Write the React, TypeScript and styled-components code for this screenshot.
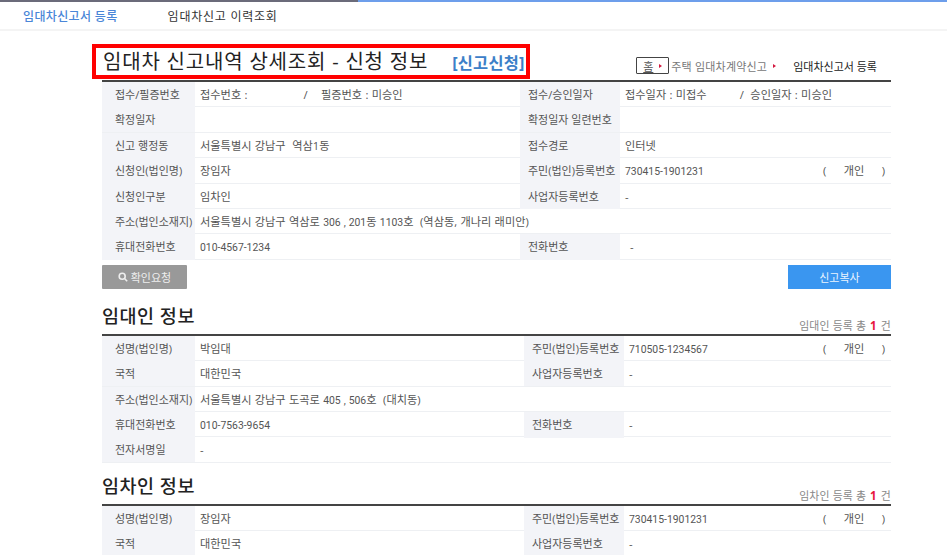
import React from "react";
import styled, { createGlobalStyle } from "styled-components";

const Global = createGlobalStyle`
  html, body { margin: 0; padding: 0; background: #fff; overflow: hidden; }
  body { font-family: "Open Sans", "Noto Sans CJK KR", sans-serif; color: #444; }
`;
const Page = styled.div`width: 947px; height: 555px; overflow: hidden; background: #fff;`;
const TopBar = styled.nav`
  height: 27px; border-top: 2px solid #6b6b7a; border-bottom: 2px solid #f4f4f4;
  display: flex; align-items: center; padding-left: 23px; gap: 50px; font-size: 12px; position: relative;
  &::before { content: ""; position: absolute; left: 358px; right: 0; top: -2px; height: 2px; background: #6d9eeb; }
`;
const NavItem = styled.span<{ $active?: boolean }>`
  color: ${p => (p.$active ? "#4a86d8" : "#333")};
  font-weight: ${p => (p.$active ? 500 : 400)};
  letter-spacing: ${p => (p.$active ? "0.35px" : "0.75px")};
`;
const Content = styled.main`margin-left: 102px; width: 789px;`;
const Head = styled.header`
  height: 49px; display: flex; justify-content: space-between; align-items: flex-end; position: relative;
`;
const TitleBox = styled.div`
  position: absolute; left: -10px; top: 13px; width: 438px; height: 35px; box-sizing: border-box;
  border: 4px solid #f00; display: flex; align-items: center; padding-left: 7px;
`;
const Title = styled.h1`margin: 0; font-size: 20px; font-weight: 400; color: #222; letter-spacing: 0.8px; white-space: nowrap; line-height: 27px;`;
const Apply = styled.span`margin-left: 24px; font-size: 16.4px; font-weight: 700; color: #3c80c8; letter-spacing: 0.2px; white-space: nowrap;`;
const Crumbs = styled.div`
  margin-left: auto; display: flex; align-items: center; height: 17px; margin-bottom: 6px; font-size: 11px; color: #777; white-space: nowrap; padding-right: 14px;
`;
const Home = styled.span`
  width: 33px; height: 17px; box-sizing: border-box; border: 1px solid #444; border-radius: 1px; display: flex; align-items: center;
  justify-content: flex-start; padding-left: 6px; gap: 6px; color: #555; text-decoration: underline; margin-right: 2px;
`;
const Arrow = styled.i<{ $gap?: number }>`
  display: inline-block; width: 0; height: 0; margin-left: ${p => p.$gap ?? 0}px;
  border-left: 3px solid #d3173f; border-top: 2.5px solid transparent; border-bottom: 2.5px solid transparent;
`;
const CrumbText = styled.span`letter-spacing: 0.2px;`;
const CrumbNow = styled.span`color: #222; margin-left: 17px;`;
const Table = styled.section`border-top: 2px solid #444; `;
const Row = styled.div<{ $left: number; $solo?: boolean }>`
  display: grid; box-sizing: border-box; height: 25.4px;
  grid-template-columns: ${p => (p.$solo ? "93px 1fr" : `93px ${p.$left}px 100px 1fr`)};
  border-bottom: 1px solid #eef0f3; font-size: 11.2px; line-height: 25px;
`;
const Label = styled.div<{ $inset?: number }>`
  background: #f3f4f8; color: #555; font-size: 11px; padding-left: ${p => p.$inset ?? 13}px; white-space: nowrap;
`;
const Cell = styled.div<{ $inset?: number }>`
  color: #555; padding-left: ${p => p.$inset ?? 5}px; white-space: pre; position: relative; word-spacing: 0.4px;
`;
const Digits = styled.span`font-family: Roboto, "Noto Sans CJK KR", sans-serif; font-size: 10.4px;`;
const Personal = styled.span<{ $at: number }>`
  position: absolute; left: ${p => p.$at}px; top: 0; width: 62px; display: flex; justify-content: space-between; color: #555;
`;
const Buttons = styled.div`display: flex; justify-content: space-between; margin-top: 5px; height: 24px;`;
const GreyBtn = styled.button`
  width: 85px; border: 0; border-radius: 1px; background: #999; color: #eee; font: inherit; font-size: 11px; display: flex; align-items: center; justify-content: center; gap: 3px; padding: 0;
`;
const BlueBtn = styled.button`
  width: 103px; border: 0; background: #3a96f0; color: #eaf4ff; font: inherit; font-size: 11px; padding: 0;
`;
const SectionHead = styled.div<{ $top: number }>`
  display: flex; justify-content: space-between; align-items: flex-end; margin-top: ${p => p.$top}px; height: 28px; padding-bottom: 6px;
`;
const SectionTitle = styled.h2`margin: 0; font-size: 18.5px; font-weight: 500; color: #222; letter-spacing: 0.5px; line-height: 24px;`;
const Count = styled.span`font-size: 10.9px; color: #888; letter-spacing: 0.15px; margin-bottom: -5px;`;
const Num = styled.b`color: #e8143c; font-size: 11.5px; margin: 0 1px;`;

const Search = () => (
  <svg width="10" height="10" viewBox="0 0 10 10" fill="none" stroke="#eee" strokeWidth="1.6">
    <circle cx="4.2" cy="4.2" r="3" />
    <path d="M6.5 6.5 9.2 9.2" />
  </svg>
);

const PersonMark = ({ at }: { at: number }) => (
  <Personal $at={at}><span>(</span><span>개인</span><span>)</span></Personal>
);

export default function App() {
  return (
    <Page>
      <Global />
      <TopBar>
        <NavItem $active>임대차신고서 등록</NavItem>
        <NavItem>임대차신고 이력조회</NavItem>
      </TopBar>
      <Content>
        <Head>
          <TitleBox>
            <Title>임대차 신고내역 상세조회 - 신청 정보</Title>
            <Apply>[신고신청]</Apply>
          </TitleBox>
          <Crumbs>
            <Home>홈<Arrow /></Home>
            <CrumbText>주택 임대차계약신고</CrumbText>
            <Arrow $gap={6} />
            <CrumbNow>임대차신고서 등록</CrumbNow>
          </Crumbs>
        </Head>
        <Table>
          <Row $left={325}><Label>접수/필증번호</Label><Cell>{"접수번호 :                 /    필증번호 : 미승인"}</Cell><Label $inset={8}>접수/승인일자</Label><Cell>{"접수일자 : 미접수          /  승인일자 : 미승인"}</Cell></Row>
          <Row $left={325}><Label>확정일자</Label><Cell /><Label $inset={8}>확정일자 일련번호</Label><Cell /></Row>
          <Row $left={325}><Label>신고 행정동</Label><Cell>서울특별시 강남구  역삼1동</Cell><Label $inset={8}>접수경로</Label><Cell>인터넷</Cell></Row>
          <Row $left={325}><Label>신청인(법인명)</Label><Cell>장임자</Cell><Label $inset={8}>주민(법인)등록번호</Label><Cell><Digits>730415-1901231</Digits><PersonMark at={203} /></Cell></Row>
          <Row $left={325}><Label>신청인구분</Label><Cell>임차인</Cell><Label $inset={8}>사업자등록번호</Label><Cell>-</Cell></Row>
          <Row $solo $left={325}><Label>주소(법인소재지)</Label><Cell>서울특별시 강남구 역삼로 <Digits>306 , 201</Digits>동 <Digits>1103</Digits>호  (역삼동, 개나리 래미안)</Cell></Row>
          <Row $left={325}><Label>휴대전화번호</Label><Cell><Digits>010-4567-1234</Digits></Cell><Label $inset={8}>전화번호</Label><Cell $inset={10}>-</Cell></Row>
        </Table>
        <Buttons>
          <GreyBtn><Search />확인요청</GreyBtn>
          <BlueBtn>신고복사</BlueBtn>
        </Buttons>
        <SectionHead $top={11}>
          <SectionTitle>임대인 정보</SectionTitle>
          <Count>임대인 등록 총 <Num>1</Num> 건</Count>
        </SectionHead>
        <Table>
          <Row $left={329}><Label>성명(법인명)</Label><Cell>박임대</Cell><Label $inset={8}>주민(법인)등록번호</Label><Cell><Digits>710505-1234567</Digits><PersonMark at={199} /></Cell></Row>
          <Row $left={329}><Label>국적</Label><Cell>대한민국</Cell><Label $inset={8}>사업자등록번호</Label><Cell>-</Cell></Row>
          <Row $solo $left={329}><Label>주소(법인소재지)</Label><Cell>서울특별시 강남구 도곡로 <Digits>405 , 506</Digits>호  (대치동)</Cell></Row>
          <Row $left={329}><Label>휴대전화번호</Label><Cell><Digits>010-7563-9654</Digits></Cell><Label $inset={8}>전화번호</Label><Cell>-</Cell></Row>
          <Row $solo $left={329}><Label>전자서명일</Label><Cell>-</Cell></Row>
        </Table>
        <SectionHead $top={7}>
          <SectionTitle>임차인 정보</SectionTitle>
          <Count>임차인 등록 총 <Num>1</Num> 건</Count>
        </SectionHead>
        <Table>
          <Row $left={329}><Label>성명(법인명)</Label><Cell>장임자</Cell><Label $inset={8}>주민(법인)등록번호</Label><Cell><Digits>730415-1901231</Digits><PersonMark at={199} /></Cell></Row>
          <Row $left={329}><Label>국적</Label><Cell>대한민국</Cell><Label $inset={8}>사업자등록번호</Label><Cell>-</Cell></Row>
        </Table>
      </Content>
    </Page>
  );
}
